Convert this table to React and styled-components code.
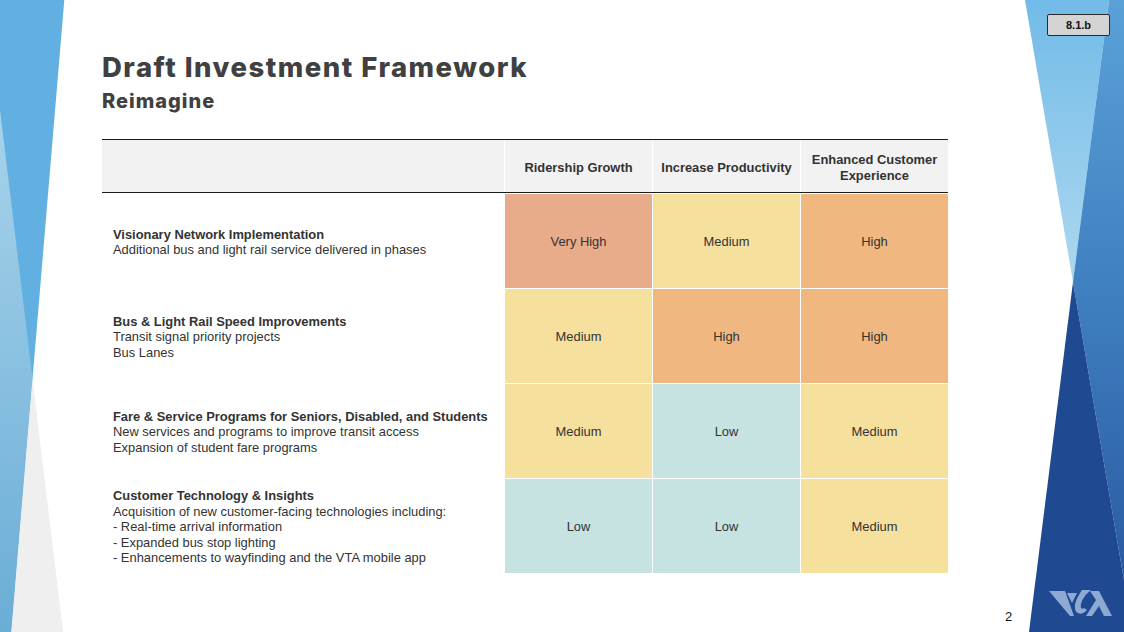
import React from "react";
import styled, { createGlobalStyle } from "styled-components";

const GlobalStyle = createGlobalStyle`
  html, body { margin: 0; padding: 0; background: #ffffff; }
  * { box-sizing: border-box; }
`;

const Slide = styled.div`
  position: relative;
  width: 1124px;
  height: 632px;
  overflow: hidden;
  background: #ffffff;
  font-family: "Liberation Sans", Arial, sans-serif;
`;

const Decor = styled.svg`
  position: absolute;
  left: 0;
  top: 0;
`;

const Content = styled.main`
  position: relative;
  padding: 51px 0 0 102px;
`;

const Title = styled.h1`
  margin: 0;
  font-family: Inter, "Open Sans", sans-serif;
  font-weight: 800;
  font-size: 27.5px;
  letter-spacing: 1.5px;
  line-height: 32px;
  color: #404040;
`;

const Subtitle = styled.h2`
  margin: 7px 0 0;
  font-family: Inter, "Open Sans", sans-serif;
  font-weight: 800;
  font-size: 20px;
  letter-spacing: 1px;
  line-height: 22px;
  color: #404040;
`;

const Table = styled.section`
  margin-top: 27px;
  width: 846px;
  display: flex;
  flex-direction: column;
  gap: 1px;
`;

const HeaderRow = styled.div`
  display: grid;
  grid-template-columns: 402px repeat(3, 147px);
  column-gap: 1px;
  border-top: 1.5px solid #1c1c1c;
  border-bottom: 1.5px solid #1c1c1c;
`;

const HeadCell = styled.div`
  height: 52px;
  background: #f2f2f2;
  display: flex;
  align-items: center;
  justify-content: center;
  text-align: center;
  padding: 3px 6px 0;
  font-size: 12.9px;
  line-height: 16px;
  font-weight: 700;
  color: #333333;
`;

const BodyRow = styled.div`
  display: grid;
  grid-template-columns: 402px repeat(3, 147px);
  column-gap: 1px;
  height: 94px;
`;

const LabelCell = styled.div`
  display: flex;
  flex-direction: column;
  justify-content: center;
  padding: 2px 0 0 11px;
  font-size: 12.9px;
  line-height: 15.5px;
  color: #333333;
`;

const LabelTitle = styled.div`
  font-weight: 700;
`;

const LabelLine = styled.div`
  font-weight: 400;
`;

const levelColors = {
  "Very High": "#e8ac8b",
  High: "#f0b781",
  Medium: "#f5e09e",
  Low: "#c6e2e1",
};

const ScoreCell = styled.div`
  display: flex;
  align-items: center;
  justify-content: center;
  background: ${(p) => levelColors[p.$level]};
  font-size: 12.9px;
  color: #333333;
`;

const Badge = styled.div`
  position: absolute;
  left: 1047px;
  top: 14px;
  width: 63px;
  height: 22px;
  background: #d4d4d4;
  border: 1.5px solid #2a2a2a;
  border-radius: 2px;
  display: flex;
  align-items: center;
  justify-content: center;
  font-family: "Liberation Sans", Arial, sans-serif;
  font-weight: 700;
  font-size: 11px;
  color: #111111;
`;

const PageNumber = styled.div`
  position: absolute;
  left: 1005px;
  top: 609px;
  font-family: "Liberation Sans", Arial, sans-serif;
  font-size: 13px;
  color: #111111;
`;

const Logo = styled.svg`
  position: absolute;
  left: 1049px;
  top: 589px;
`;

const columns = ["Ridership Growth", "Increase Productivity", "Enhanced Customer Experience"];

const rows = [
  {
    title: "Visionary Network Implementation",
    lines: ["Additional bus and light rail service delivered in phases"],
    scores: ["Very High", "Medium", "High"],
  },
  {
    title: "Bus & Light Rail Speed Improvements",
    lines: ["Transit signal priority projects", "Bus Lanes"],
    scores: ["Medium", "High", "High"],
  },
  {
    title: "Fare & Service Programs for Seniors, Disabled, and Students",
    lines: ["New services and programs to improve transit access", "Expansion of student fare programs"],
    scores: ["Medium", "Low", "Medium"],
  },
  {
    title: "Customer Technology & Insights",
    lines: [
      "Acquisition of new customer-facing technologies including:",
      "- Real-time arrival information",
      "- Expanded bus stop lighting",
      "- Enhancements to wayfinding and the VTA mobile app",
    ],
    scores: ["Low", "Low", "Medium"],
  },
];

function Decorations() {
  return (
    <Decor width="1124" height="632" viewBox="0 0 1124 632">
      <defs>
        <linearGradient id="gLeft" x1="0" y1="110" x2="0" y2="632" gradientUnits="userSpaceOnUse">
          <stop offset="0" stopColor="#a8d3ea" />
          <stop offset="1" stopColor="#6aadd7" />
        </linearGradient>
        <linearGradient id="gLight" x1="0" y1="0" x2="0" y2="282" gradientUnits="userSpaceOnUse">
          <stop offset="0" stopColor="#72bbe8" />
          <stop offset="1" stopColor="#acd8ef" />
        </linearGradient>
        <linearGradient id="gMid" x1="0" y1="0" x2="0" y2="580" gradientUnits="userSpaceOnUse">
          <stop offset="0" stopColor="#5aa1d8" />
          <stop offset="0.5" stopColor="#3f80c0" />
          <stop offset="1" stopColor="#2a5aa3" />
        </linearGradient>
      </defs>
      <polygon points="0,0 64.3,0 11.3,632 0,632" fill="#62b0e2" />
      <polygon points="0,110 32.5,378.7 11.3,632 0,632" fill="url(#gLeft)" />
      <polygon points="32.5,378.7 63.1,632 11.3,632" fill="#efefef" />

      <polygon points="1025,0 1109,0 1073,282" fill="url(#gLight)" />
      <polygon points="1109,0 1124,0 1124,580 1073,282" fill="url(#gMid)" />
      <polygon points="1073,282 1124,580 1124,632 1029,632" fill="#1f4a91" />
    </Decor>
  );
}

function VtaLogo() {
  return (
    <Logo width="64" height="28" viewBox="0 0 64 28">
      <g fill="#8eaad3">
        <path d="M0,2 L16,2 L25,27 L21,27 Z" />
        <path d="M18,4 L28,4 L23,14 Z" />
        <path d="M33,1 L42,1 C37,5 33,10 32,15 C31,19 33,21 35,19 L38,21 C34,26 27,26 26,20 C25,14 29,7 33,1 Z" />
        <path d="M41,2 L50,2 L63,27 L55,27 L50,17 L43,27 L37,27 L47,11 Z" />
      </g>
    </Logo>
  );
}

export default function App() {
  return (
    <>
      <GlobalStyle />
      <Slide>
        <Decorations />
        <Badge>8.1.b</Badge>
        <Content>
          <Title>Draft Investment Framework</Title>
          <Subtitle>Reimagine</Subtitle>
          <Table>
            <HeaderRow>
              <HeadCell />
              {columns.map((c) => (
                <HeadCell key={c}>{c}</HeadCell>
              ))}
            </HeaderRow>
            {rows.map((r) => (
              <BodyRow key={r.title}>
                <LabelCell>
                  <LabelTitle>{r.title}</LabelTitle>
                  {r.lines.map((l) => (
                    <LabelLine key={l}>{l}</LabelLine>
                  ))}
                </LabelCell>
                {r.scores.map((s, i) => (
                  <ScoreCell key={i} $level={s}>
                    {s}
                  </ScoreCell>
                ))}
              </BodyRow>
            ))}
          </Table>
        </Content>
        <PageNumber>2</PageNumber>
        <VtaLogo />
      </Slide>
    </>
  );
}
